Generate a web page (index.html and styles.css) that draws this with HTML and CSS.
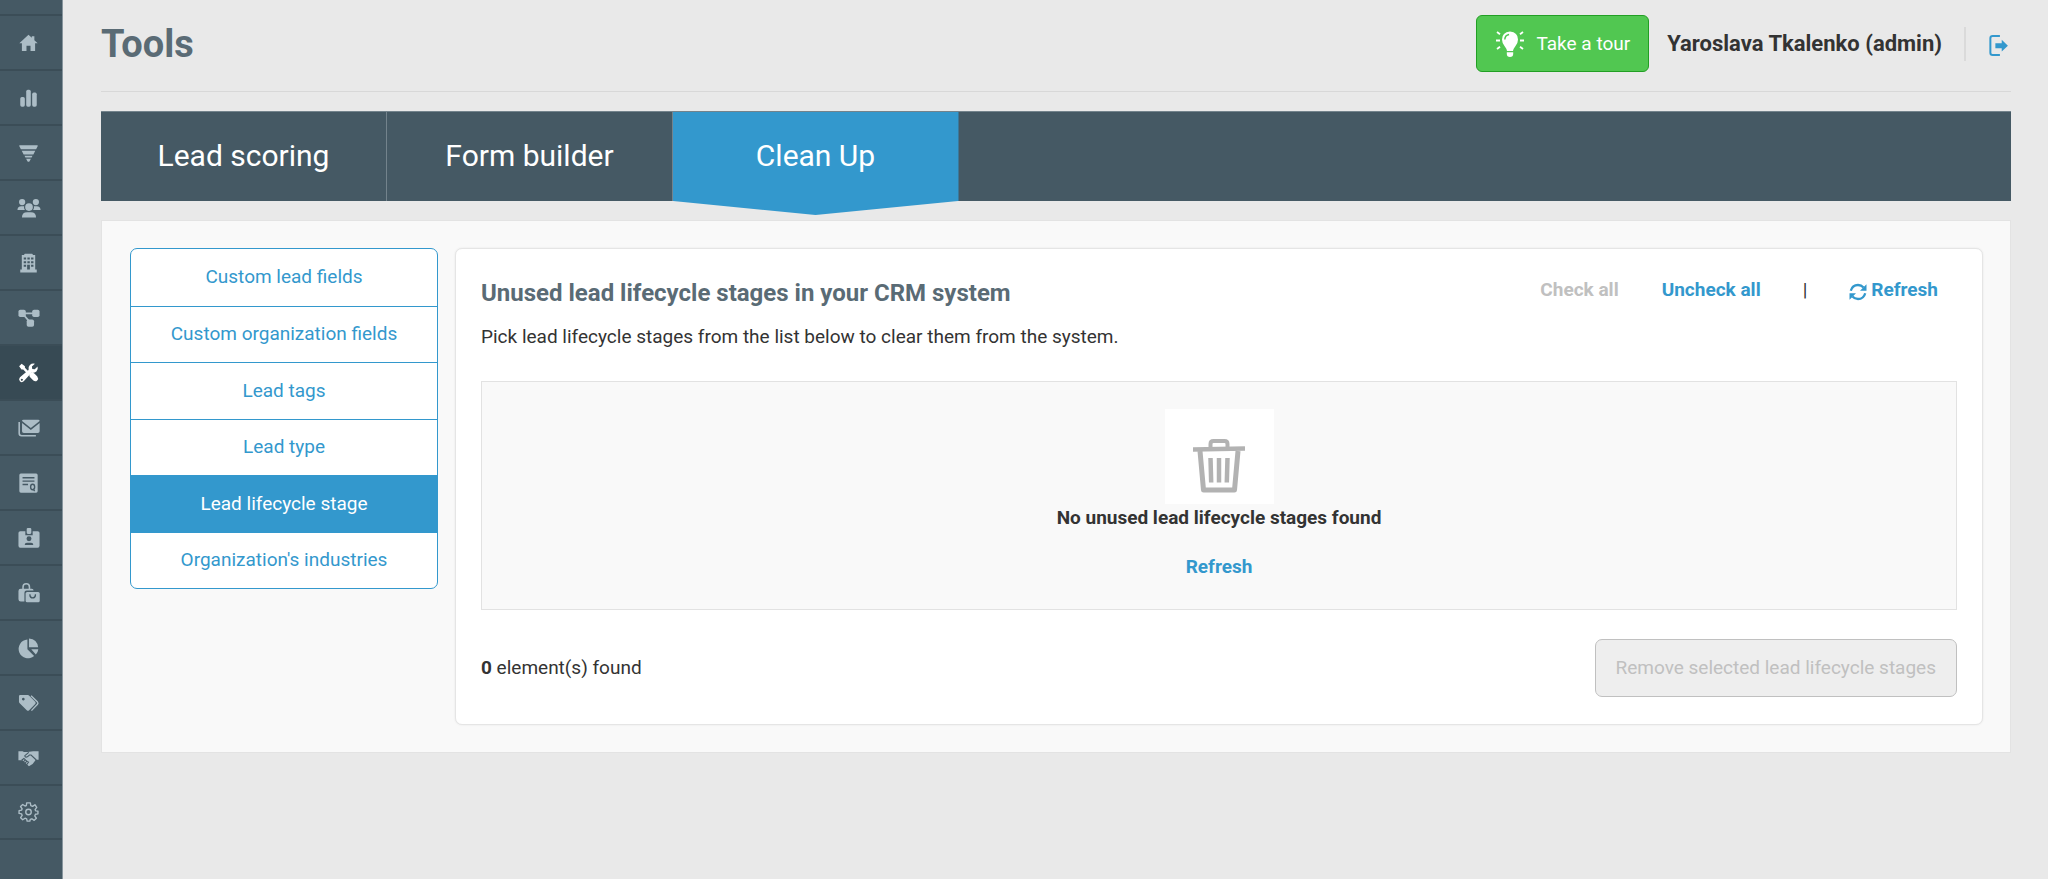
FILE: index.html
```html
<!DOCTYPE html>
<html lang="en">
<head>
<meta charset="utf-8">
<title>Tools - Clean Up</title>
<link rel="stylesheet" href="styles.css">
</head>
<body>
<div class="app">
  <nav class="rail" aria-label="Main">
    <a class="rail-item" href="#" aria-label="Home"><svg viewBox="0 0 24 24"><path d="M12 3 2 12.2h2.8V20.6h5v-5.6h4.4v5.6h5v-8.4H22L18.4 8.9V4.6h-2.8v1.7z"/></svg></a>
    <a class="rail-item" href="#" aria-label="Statistics"><svg viewBox="0 0 24 24"><rect x="3" y="11" width="5" height="10.500" rx="1.800"/><rect x="9.500" y="3" width="5" height="18.500" rx="1.800"/><rect x="16" y="6" width="5" height="15.500" rx="1.800"/></svg></a>
    <a class="rail-item" href="#" aria-label="Funnel"><svg viewBox="0 0 24 24"><path d="M2.500 3.500h19q1 0 .5 1L20.300 8H3.700L2 4.500q-.5-1 .5-1zM4.600 9.500h14.800l-2.100 4H6.700zM7.600 15h8.800l-1 2H8.600zM9.400 18.300h5.200l-1.400 2.600q-1.200 1.200-2.400 0z"/></svg></a>
    <a class="rail-item" href="#" aria-label="Leads"><svg class="wide" viewBox="0 0 26 24"><circle cx="5.500" cy="5.500" r="3.400"/><circle cx="20.500" cy="5.500" r="3.400"/><circle cx="13" cy="11" r="4.200"/><path d="M.4 14.300q0-4.300 4.300-4.300H7.700q-.7 2.400.8 4.300zM25.600 14.300q0-4.300-4.300-4.300H18.300q.7 2.400-.8 4.300zM5.300 22.300q0-5.700 5.700-5.700h4q5.700 0 5.700 5.700z"/></svg></a>
    <a class="rail-item" href="#" aria-label="Organizations"><svg viewBox="0 0 24 24"><path fill-rule="evenodd" d="M8 1.800h8l1 1.500h2.300V19h1.700v3.300H3V19h1.700V3.300H7zM6.800 6v2.200h2.600V6zm4 0v2.200h2.600V6zm4 0v2.200h2.600V6zM6.800 10v2.200h2.600V10zm4 0v2.200h2.600V10zm4 0v2.200h2.600V10zM6.800 14v2.200h2.600V14zm8 0v2.200h2.600V14zM10.500 14v5h3v-5z"/></svg></a>
    <a class="rail-item" href="#" aria-label="Workflows"><svg class="wide" viewBox="0 0 26 24"><rect x="1.500" y="3" width="8" height="8" rx="2"/><rect x="16.500" y="3" width="8" height="8" rx="2"/><rect x="10.500" y="13.500" width="8" height="8" rx="2"/><path d="M7 7h12M7.500 9l6 7" fill="none" stroke="currentColor" stroke-width="2"/></svg></a>
    <a class="rail-item is-active" href="#" aria-label="Tools" aria-current="page"><svg viewBox="0 0 24 24"><path d="M4.500 1.800 1.800 4.500l2.500 3.700h1.900l4.300 4.300 1.800-1.800-4.200-4.300V4.500zM13.200 12.600l1.700-.8q2.200-.6 3.800.9l2.900 3.100q1.700 2.300-.1 4.300-2 1.800-4.200.1l-3.500-3.500q-1.400-1.500-.6-4.100z"/><path fill-rule="evenodd" d="M19 1.900q-3.100-.8-5.500 1.300-2.200 2.200-1.400 5.500l-9.400 8q-1.900 2.100-.1 4.300 2.200 1.900 4.200.1l8.400-9.300q3.100.6 5.400-1.500 2.200-2.300 1.300-5.400l-3.100 3.100-2.700-.5-.4-2.600zM4.700 18.300a1.100 1.100 0 1 0 .1 0z"/></svg></a>
    <a class="rail-item" href="#" aria-label="Mailings"><svg class="wide" viewBox="0 0 26 24"><path d="M7 3h16q1.600 0 1.600 1.300L15 12 5.400 4.300Q5.400 3 7 3z"/><path d="M5.400 6.500 15 14.200l9.600-7.700v9q0 2-2 2H7.400q-2 0-2-2z"/><path d="M2.300 5.500v12.300q0 2.700 2.700 2.700h15.500" fill="none" stroke="currentColor" stroke-width="1.700"/></svg></a>
    <a class="rail-item" href="#" aria-label="Questionnaires"><svg viewBox="0 0 24 24"><rect x="2" y="1.500" width="20" height="21" rx="1.700"/><g fill="none" stroke="#455964" stroke-width="1.500"><path d="M5.500 6.300h13M5.500 10h13M5.500 13.700h6"/><ellipse cx="16.500" cy="16.300" rx="2.200" ry="3"/><path d="m17 18.500 1.700 2.300"/></g></svg></a>
    <a class="rail-item" href="#" aria-label="Contacts"><svg class="wide" viewBox="0 0 26 24"><rect x="1.500" y="4.500" width="23" height="18" rx="2"/><rect x="9" y="2" width="8" height="7" fill="#455964"/><rect x="10.500" y="1" width="5" height="6.500" rx="1.200"/><circle cx="13" cy="12.800" r="2.700" fill="#455964"/><path d="M8.300 19.600q0-2.400 2.400-2.400h4.600q2.400 0 2.400 2.400z" fill="#455964"/></svg></a>
    <a class="rail-item" href="#" aria-label="Products"><svg class="wide" viewBox="0 0 26 24"><path d="M6.500 8V5.500Q6.500 2 10 2t3.500 3.500V8" fill="none" stroke="currentColor" stroke-width="1.700"/><path d="M4 7.300h12q2 0 2 2H10.500q-2.500 0-2.500 2.500v9.400H4q-2.500 0-2.500-2.500V9.800q0-2.500 2.500-2.500z"/><path d="M11 10.800h12q1.700 0 1.700 1.700v8q0 1.700-1.700 1.700H11q-1.700 0-1.700-1.700v-8q0-1.700 1.700-1.700z"/><path d="M14 13.300v1q.2 3 3 3t3-3v-1" fill="none" stroke="#455964" stroke-width="1.400"/></svg></a>
    <a class="rail-item" href="#" aria-label="Reports"><svg viewBox="0 0 24 24"><path d="M10.800 2.800v10.500l7.300 7.400A10.200 10.200 0 1 1 10.800 2.800z"/><path d="M12.500 1.500q9 .4 10 9.800h-10zM15 13.300h7.700q-.4 3.600-2.700 5.700z"/></svg></a>
    <a class="rail-item" href="#" aria-label="Tags"><svg viewBox="0 0 24 24"><path fill-rule="evenodd" d="M1.600 4.600q0-1.300 1.300-1.300h8.300q1 0 1.600.7l6.500 6.500q1.300 1.400 0 2.700l-6.600 6.600q-1.300 1.200-2.600 0L2.400 12.200q-.8-.7-.8-1.700zM6.300 6.300a1.500 1.500 0 1 0 .1 0z"/><path d="m14.800 4 7 7q1 1.200 0 2.300l-6.600 7" fill="none" stroke="currentColor" stroke-width="1.500"/></svg></a>
    <a class="rail-item" href="#" aria-label="Deals"><svg viewBox="0 0 24 24"><path d="M1 4.500h4.500l1.500 1h4L17 4.500h6V14h-3l-3.500 4.500-4 2.500-7-6.500H1z"/><path d="M12.300 5.800 8 9.400q.2 2.400 2.800 1.300L13 8.800h1.800l5.700 5.400M4.500 14.500l2.500-2 1.500 1.500-3.500 4M8.500 14l1.700 1.400-3.400 4M10.200 15.400l1.800 1.200-2.600 3.400" fill="none" stroke="#455964" stroke-width="1.200"/></svg></a>
    <a class="rail-item" href="#" aria-label="Settings"><svg viewBox="0 0 24 24" fill="none" stroke="currentColor" stroke-width="1.500"><circle cx="12" cy="12" r="3"/><path d="M10 2h4l.5 3 2 .9 2.500-1.800L21 7l-1.800 2.500.6 1.200 2.500.3v3l-2.700.5-.8 1.800 1.800 2.500-2.400 2.300-2.500-1.700-1.800.7L13.500 22h-3l-.5-2.500-1.800-.7-2.500 1.700-2.300-2.300 1.700-2.500-.7-1.700-2.700-.5v-3l2.700-.5.7-1.500L3.300 6l2.400-2.200 2.500 1.700 1.500-.6z" stroke-linejoin="round"/></svg></a>
  </nav>

  <main class="main">
    <header class="header">
      <h1 class="title">Tools</h1>
      <div class="account">
        <button class="tour" type="button"><svg viewBox="0 0 30 28" aria-hidden="true"><path d="M15 1.500q-8 .8-8 8 0 3.300 2.500 6.500 2 2.500 2.500 5h6q.5-2.500 2.500-5 2.500-3.200 2.500-6.500 0-7.200-8-8z"/><path d="M11.800 22.300h6.400v1.500q0 3.200-3.200 3.200t-3.200-3.200z"/><path d="M9.800 9.500q.2-4.300 4.300-5" fill="none" stroke="#51c751" stroke-width="1.500"/><path d="m2 2 3 2.300M1 10.500h4M2 19l3-2.300M28 2l-3 2.300M29 10.500h-4M28 19l-3-2.300" fill="none" stroke="currentColor" stroke-width="1.800"/></svg><span>Take a tour</span></button>
        <span class="user">Yaroslava Tkalenko (admin)</span>
        <a class="logout" href="#" aria-label="Log out"><svg viewBox="0 0 22 24"><path d="M12 1.500H4Q1.500 1.500 1.500 4v16q0 2.500 2.500 2.500h8" fill="none" stroke="currentColor" stroke-width="2.200"/><path d="M7 9.500h7V5.700l6.800 6.500-6.800 6.500V15H7z"/></svg></a>
      </div>
    </header>

    <nav class="tabs" aria-label="Tools sections">
      <a class="tab" href="#">Lead scoring</a>
      <a class="tab" href="#">Form builder</a>
      <a class="tab is-active" href="#" aria-current="page">Clean Up</a>
    </nav>

    <section class="panel">
      <nav class="menu" aria-label="Clean up sections">
        <a class="menu-item" href="#">Custom lead fields</a>
        <a class="menu-item" href="#">Custom organization fields</a>
        <a class="menu-item" href="#">Lead tags</a>
        <a class="menu-item" href="#">Lead type</a>
        <a class="menu-item is-active" href="#" aria-current="page">Lead lifecycle stage</a>
        <a class="menu-item" href="#">Organization's industries</a>
      </nav>

      <div class="card">
        <div class="card-head">
          <h2 class="card-title">Unused lead lifecycle stages in your CRM system</h2>
          <div class="actions">
            <button class="link" type="button" disabled>Check all</button>
            <button class="link uncheck" type="button">Uncheck all</button>
            <span class="divider">|</span>
            <button class="link refresh" type="button"><svg viewBox="0 0 18 18" aria-hidden="true"><path d="M1.800 7.800Q3.300 2 9 2q3.300 0 5.600 2.500M16.200 10.200Q14.700 16 9 16q-3.300 0-5.600-2.500" fill="none" stroke="currentColor" stroke-width="2.300"/><path d="M17.500 1.300v6.500H11zM.5 16.700v-6.500H7z"/></svg>Refresh</button>
          </div>
        </div>
        <p class="hint">Pick lead lifecycle stages from the list below to clear them from the system.</p>

        <div class="empty">
          <div class="empty-pic"><svg viewBox="0 0 52 56" fill="none" stroke="#b2b2b2" stroke-width="5" aria-hidden="true"><path d="M0 11.500 52 10.500" stroke-width="4.500"/><path d="M17.500 10V6q0-3 3-3h11q3 0 3 3v4" stroke-width="4"/><path d="M7 13 10.500 52h31L45 13" stroke-linejoin="round"/><path d="m17.500 20 .7 24.500M26 20v24.500M34.500 20l-.7 24.500" stroke-width="4.500"/></svg></div>
          <strong class="empty-text">No unused lead lifecycle stages found</strong>
          <button class="link" type="button">Refresh</button>
        </div>

        <div class="card-foot">
          <span><strong>0</strong> element(s) found</span>
          <button class="remove" type="button" disabled>Remove selected lead lifecycle stages</button>
        </div>
      </div>
    </section>
  </main>
</div>
</body>
</html>
```
FILE: styles.css
```css
* { box-sizing: border-box; }

body {
  margin: 0;
  background: #e9e9e9;
  color: #333;
  font: 19px/24px Roboto, "Liberation Sans", sans-serif;
}

h1, h2, p { margin: 0; }
a { color: #3398cd; text-decoration: none; }
button { font: inherit; cursor: pointer; }
button:disabled { cursor: default; }
svg { fill: currentColor; }

.app { display: flex; min-height: 100vh; }

/* Icon rail */
.rail {
  flex: none;
  width: 63px;
  padding-top: 14px;
  background: #455964;
  border-right: 1px solid #87959d;
}
.rail-item {
  display: flex;
  align-items: center;
  justify-content: center;
  height: 55px;
  padding-right: 5px;
  border-top: 2px solid #3b4d57;
  color: #acbdc6;
}
.rail-item:last-child { height: 56px; border-bottom: 2px solid #3b4d57; }
.rail-item.is-active { background: #374a54; color: #fff; }
.rail-item svg { width: 23px; height: 22px; }
.rail-item .wide { width: 26px; height: 22px; }
.rail-item svg[fill="none"] { fill: none; }

/* Page */
.main { flex: 1; min-width: 0; padding: 0 37px 0 38px; }
.header {
  display: flex;
  align-items: center;
  justify-content: space-between;
  height: 92px;
  padding-bottom: 4px;
  border-bottom: 1px solid #d8d8d8;
}
.title { font-size: 38px; line-height: 44px; color: #5a6b75; }
.account { display: flex; align-items: center; }
.tour {
  display: flex;
  align-items: center;
  gap: 11px;
  height: 57px;
  padding: 0 18px;
  border: 1px solid #229f24;
  border-radius: 6px;
  background: #51c751;
  color: #fff;
}
.tour svg { width: 30px; height: 28px; }
.user { margin-left: 18px; font-size: 22px; font-weight: 700; }
.logout {
  display: flex;
  align-items: center;
  height: 34px;
  margin-left: 22px;
  padding: 4px 2px 0 23px;
  border-left: 2px solid #dadada;
}
.logout svg { width: 20px; height: 23px; }

/* Tabs */
.tabs { display: flex; margin-top: 19px; background: #455964; border-top: 1px solid #73838c; }
.tab {
  position: relative;
  flex: 0 0 286px;
  padding: 27px 12px 29px;
  border-right: 1px solid #73838c;
  color: #fff;
  font-size: 30px;
  line-height: 33px;
  text-align: center;
}
.tab.is-active { background: #3398cd; border-right-color: #3b7899; }
.tab.is-active::after {
  content: "";
  position: absolute;
  top: 100%;
  left: 0;
  width: 100%;
  height: 14px;
  background: #3398cd;
  clip-path: polygon(0 0, 100% 0, 50% 100%);
}

/* Content */
.panel {
  display: flex;
  align-items: flex-start;
  gap: 17px;
  margin-top: 19px;
  padding: 27px 27px 27px 28px;
  background: #f9f9f9;
  border: 1px solid #e3e3e3;
}
.menu {
  display: grid;
  grid-auto-rows: 1fr;
  flex: 0 0 308px;
  min-height: 341px;
  overflow: hidden;
  border: 1px solid #3398cd;
  border-radius: 7px;
  background: #fff;
}
.menu-item {
  display: flex;
  align-items: center;
  justify-content: center;
  padding: 12px;
}
.menu-item + .menu-item { border-top: 1px solid #3398cd; }
.menu-item.is-active { background: #3398cd; color: #fff; }

.card {
  flex: 1;
  min-width: 0;
  padding: 29px 25px 27px;
  background: #fff;
  border: 1px solid #e5e5e5;
  border-radius: 7px;
  box-shadow: 0 0 2px #e5e5e5;
}
.card-head { display: flex; align-items: flex-start; justify-content: space-between; }
.card-title { font-size: 24px; line-height: 31px; color: #5a6b75; }
.actions { display: flex; padding-right: 19px; }
.link {
  padding: 0;
  border: 0;
  background: none;
  color: #3398cd;
  font-weight: 700;
}
.link:disabled { color: #c0c0c0; }
.uncheck { margin-left: 43px; }
.divider { margin: 0 42px; }
.refresh { display: flex; align-items: center; gap: 4px; }
.refresh svg { width: 18px; height: 18px; margin-top: 4px; }
.hint { margin-top: 16px; }

.empty {
  display: flex;
  flex-direction: column;
  align-items: center;
  margin-top: 32px;
  padding: 27px 0 30px;
  background: #f9f9f9;
  border: 1px solid #e2e2e2;
}
.empty-pic {
  display: flex;
  justify-content: center;
  width: 109px;
  height: 95px;
  padding-top: 29px;
  background: #fff;
}
.empty-pic svg { width: 52px; height: 56px; fill: none; }
.empty-text { margin: 2px 0 25px; font-weight: 700; }

.card-foot { display: flex; align-items: center; justify-content: space-between; margin-top: 29px; }
.remove {
  height: 58px;
  padding: 0 20px;
  border: 1px solid #c0c0c0;
  border-radius: 7px;
  background: #eee;
  color: #c0c0c0;
}
```
